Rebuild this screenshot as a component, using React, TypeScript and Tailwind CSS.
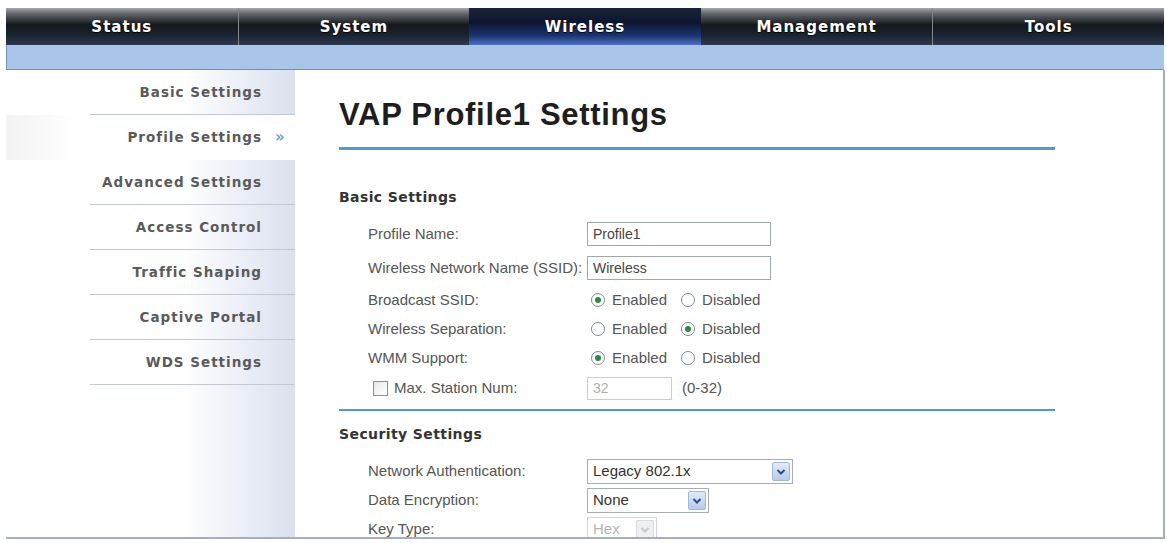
import React from 'react'

const tabs = ['Status', 'System', 'Wireless', 'Management', 'Tools']

const sideItems = [
  'Basic Settings',
  'Profile Settings',
  'Advanced Settings',
  'Access Control',
  'Traffic Shaping',
  'Captive Portal',
  'WDS Settings',
]

function Radio({ on }: { on?: boolean }) {
  return (
    <span className="flex h-[14px] w-[14px] items-center justify-center rounded-full border border-[#7d8c9c] bg-white">
      {on && <span className="h-[6px] w-[6px] rounded-full bg-[#2f8a3c]" />}
    </span>
  )
}

function RadioPair({ enabled }: { enabled: boolean }) {
  return (
    <div className="flex items-center pl-[4px] text-[15px] text-[#555]">
      <Radio on={enabled} />
      <span className="ml-[7px]">Enabled</span>
      <span className="ml-[14px]">
        <Radio on={!enabled} />
      </span>
      <span className="ml-[7px]">Disabled</span>
    </div>
  )
}

function Arrow({ disabled }: { disabled?: boolean }) {
  return (
    <span
      className={`mr-[2px] flex h-[19px] w-[18px] items-center justify-center rounded-[2px] border ${
        disabled ? 'border-[#d8dce2] bg-[#eef0f3]' : 'border-[#a2b6da] bg-gradient-to-b from-[#e2eaf8] to-[#b8cbea]'
      }`}
    >
      <svg width="10" height="8" viewBox="0 0 10 8">
        <path d="M1.5 2 L5 5.5 L8.5 2" fill="none" stroke={disabled ? '#c4c8ce' : '#2b4f93'} strokeWidth="2" />
      </svg>
    </span>
  )
}

function Select({ width, text, disabled }: { width: string; text: string; disabled?: boolean }) {
  return (
    <div
      className={`flex h-[25px] items-center justify-between border bg-white pl-[5px] text-[15px] ${width} ${
        disabled ? 'border-[#d2d6dc] text-[#b4b4b4]' : 'border-[#a7adb5] text-[#333]'
      }`}
    >
      <span>{text}</span>
      <Arrow disabled={disabled} />
    </div>
  )
}

function Label({ children }: { children: React.ReactNode }) {
  return <div className="flex w-[219px] items-center text-[15px] text-[#555]">{children}</div>
}

export default function App() {
  return (
    <div className="h-[543px] w-[1167px] overflow-hidden bg-white pl-[6px] pt-[8px] font-['Liberation_Sans',Arial,sans-serif]">
      <div className="w-[1159px]">
        {/* top menu */}
        <div className="grid h-[37px] w-[1158px] grid-cols-5 bg-[linear-gradient(to_bottom,#a3a7ad_0%,#60646a_16%,#15181c_45%,#1a2230_72%,#2c3a50_100%)]">
          {tabs.map((tab, i) => (
            <div
              key={tab}
              className={`flex items-center justify-center pt-[2px] font-['DejaVu_Sans',sans-serif] text-[15px] font-bold tracking-[1px] text-white [text-shadow:0_1px_1px_rgba(0,0,0,0.8)] ${
                tab === 'Wireless'
                  ? 'bg-[linear-gradient(to_bottom,#1c2438_0%,#0b1530_40%,#1b3570_75%,#4d70c4_100%)]'
                  : ''
              } ${i === 1 || i === 4 ? 'border-l border-[#80858c]' : ''}`}
            >
              {tab}
            </div>
          ))}
        </div>
        <div className="h-[25px] w-[1158px] border-b border-l border-[#7090b8] bg-[#a9c6ea]" />

        {/* body */}
        <div className="flex h-[469px] overflow-hidden border-r-2 border-b-2 border-[#a5aebb]">
          <div className="flex w-[289px] shrink-0 flex-col font-['DejaVu_Sans',sans-serif] text-[13.5px] font-bold tracking-[1px] text-[#5a5a5a]">
            {sideItems.map((item) =>
              item === 'Profile Settings' ? (
                <div
                  key={item}
                  className="flex h-[45px] shrink-0 items-center justify-end bg-gradient-to-r from-[#f3f3f3] to-white to-25% pr-[7px]"
                >
                  <span>{item}</span>
                  <span className="ml-[13px] w-[13px] text-[15px] leading-none tracking-[-2px] text-[#7a9cc8]">»</span>
                </div>
              ) : (
                <div
                  key={item}
                  className="ml-[84px] flex h-[45px] shrink-0 items-center justify-end border-b border-[#c3c8d2] bg-gradient-to-r from-white from-45% to-[#dae0ef] pr-[33px]"
                >
                  {item}
                </div>
              )
            )}
            <div className="ml-[84px] flex-1 bg-gradient-to-r from-white from-45% to-[#dae0ef]" />
          </div>

          <div className="flex-1 pl-[44px]">
            <div className="pt-[28px] text-[31px] leading-[34px] font-bold tracking-[0.7px] text-[#1e1e1e]">
              VAP Profile1 Settings
            </div>
            <div className="mt-[15px] h-[3px] w-[716px] bg-[#5a98cc]" />

            <div className="mt-[37px] h-[20px] font-['DejaVu_Sans',sans-serif] text-[14px] leading-[20px] font-bold tracking-[0.4px] text-[#333]">
              Basic Settings
            </div>
            <div className="pl-[29px]">
              <div className="mt-[15px] flex h-[24px] items-center">
                <Label>Profile Name:</Label>
                <div className="flex h-[24px] w-[184px] items-center border border-[#9ea7b2] pl-[5px] text-[14px] text-[#444]">
                  Profile1
                </div>
              </div>
              <div className="mt-[10px] flex h-[24px] items-center">
                <Label>Wireless Network Name (SSID):</Label>
                <div className="flex h-[24px] w-[184px] items-center border border-[#9ea7b2] pl-[5px] text-[14px] text-[#444]">
                  Wireless
                </div>
              </div>
              <div className="mt-[8px] flex h-[24px] items-center">
                <Label>Broadcast SSID:</Label>
                <RadioPair enabled />
              </div>
              <div className="mt-[5px] flex h-[24px] items-center">
                <Label>Wireless Separation:</Label>
                <RadioPair enabled={false} />
              </div>
              <div className="mt-[5px] flex h-[24px] items-center">
                <Label>WMM Support:</Label>
                <RadioPair enabled />
              </div>
              <div className="mt-[6px] flex h-[24px] items-center">
                <Label>
                  <span className="ml-[5px] h-[15px] w-[15px] border border-[#8a8f96] bg-gradient-to-br from-[#e9e9e9] to-white" />
                  <span className="ml-[6px]">Max. Station Num:</span>
                </Label>
                <div className="flex h-[23px] w-[85px] items-center border border-[#c9ccd1] pl-[5px] text-[14px] text-[#b0b0b0]">
                  32
                </div>
                <span className="ml-[10px] text-[15px] text-[#555]">(0-32)</span>
              </div>
            </div>

            <div className="mt-[9px] h-[2px] w-[716px] bg-[#5a98cc]" />

            <div className="mt-[13px] h-[20px] font-['DejaVu_Sans',sans-serif] text-[14px] leading-[20px] font-bold tracking-[0.4px] text-[#333]">
              Security Settings
            </div>
            <div className="pl-[29px]">
              <div className="mt-[15px] flex h-[25px] items-center">
                <Label>Network Authentication:</Label>
                <Select width="w-[206px]" text="Legacy 802.1x" />
              </div>
              <div className="mt-[4px] flex h-[25px] items-center">
                <Label>Data Encryption:</Label>
                <Select width="w-[122px]" text="None" />
              </div>
              <div className="mt-[4px] flex h-[25px] items-center">
                <Label>Key Type:</Label>
                <Select width="w-[70px]" text="Hex" disabled />
              </div>
            </div>
          </div>
        </div>
      </div>
    </div>
  )
}
